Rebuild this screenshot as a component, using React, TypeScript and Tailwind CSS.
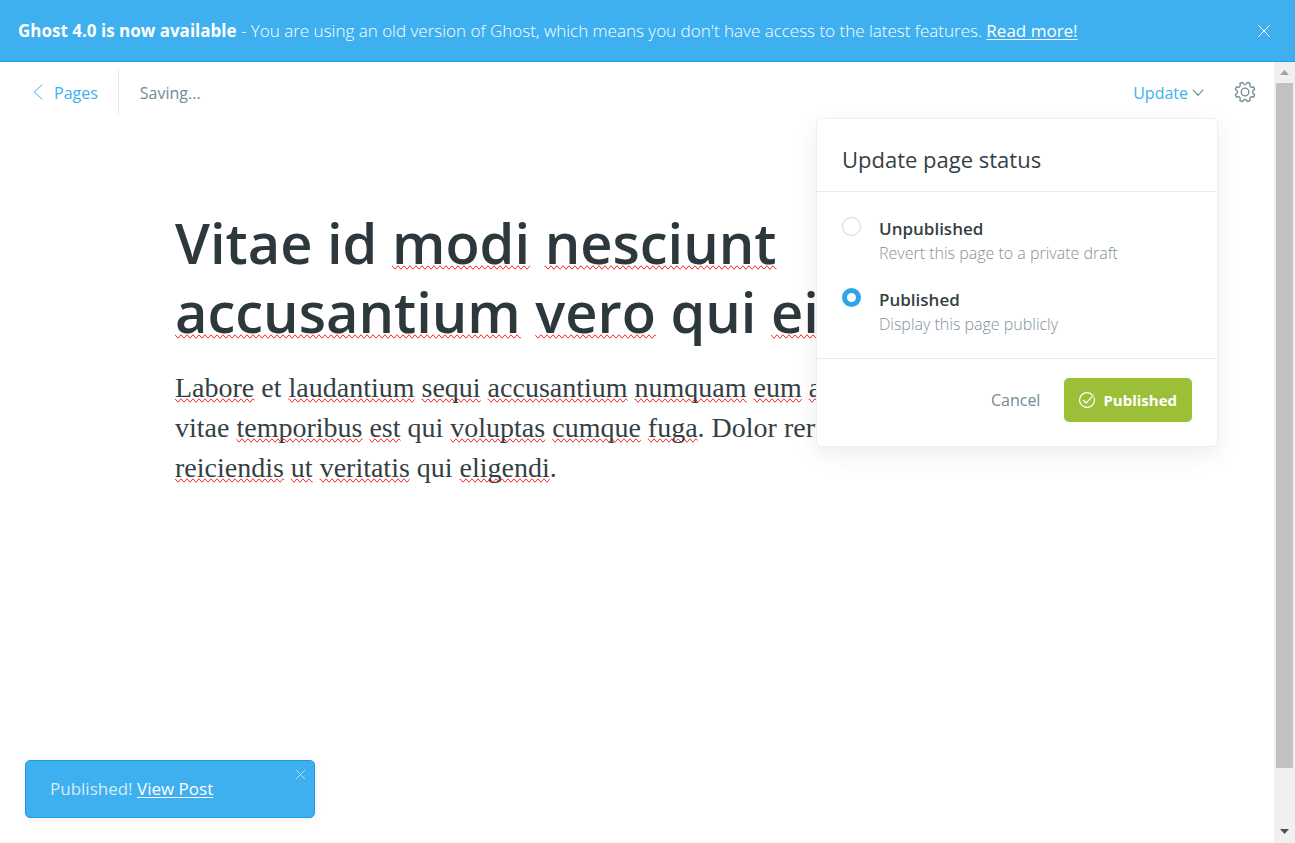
import { useState } from 'react';
import type { ReactNode } from 'react';

function Typo({ children }: { children: ReactNode }) {
  return <span className="[text-decoration-line:spelling-error]">{children}</span>;
}

function CloseIcon({ className }: { className: string }) {
  return (
    <svg viewBox="0 0 12 12" fill="none" stroke="currentColor" className={className} aria-hidden="true">
      <path d="M.5 .5 11.5 11.5M11.5 .5 .5 11.5" strokeLinecap="round" />
    </svg>
  );
}

function polar(angle: number, radius: number) {
  const a = (angle * Math.PI) / 180;
  return `${(11 + radius * Math.sin(a)).toFixed(2)} ${(11 - radius * Math.cos(a)).toFixed(2)}`;
}

function GearIcon() {
  let d = '';
  for (let i = 0; i < 8; i++) {
    const c = i * 45 + 22.5;
    d += `${i === 0 ? 'M' : 'L'}${polar(c - 8, 10)}L${polar(c + 8, 10)}L${polar(c + 11, 8.6)}Q${polar(c + 22.5, 6.6)} ${polar(c + 34, 8.6)}`;
  }
  return (
    <svg viewBox="0 0 22 22" fill="none" stroke="currentColor" strokeWidth="1.3" strokeLinejoin="round" className="size-[22px]" aria-hidden="true">
      <path d={`${d}Z`} />
      <circle cx="11" cy="11" r="3.8" />
    </svg>
  );
}

function Banner() {
  return (
    <aside className="flex h-[62px] shrink-0 items-center justify-between border-b border-[#1f9ae6] bg-[#3eb0ef] pr-[25px] pl-[18px] text-[17px] text-white">
      <p>
        <strong className="font-bold">Ghost 4.0 is now available</strong>
        <span className="font-light"> - You are using an old version of Ghost, which means you don't have access to the latest features. </span>
        <a href="#upgrade" className="underline underline-offset-2">Read more!</a>
      </p>
      <button type="button" aria-label="Dismiss">
        <CloseIcon className="size-3" />
      </button>
    </aside>
  );
}

function Option({ value, title, detail, selected, onSelect }: { value: string; title: string; detail: string; selected: boolean; onSelect: (v: string) => void }) {
  return (
    <label className="flex cursor-pointer gap-[18px]">
      <input
        type="radio"
        name="status"
        value={value}
        checked={selected}
        onChange={() => onSelect(value)}
        className="mt-px size-[19px] shrink-0 appearance-none rounded-full border border-[#c5d9e8] bg-white checked:border-[5px] checked:border-[#30a4e9]"
      />
      <span className="flex flex-col">
        <span className="text-[17px] leading-[25px] font-semibold text-[#343f44]">{title}</span>
        <span className="text-[16px] leading-[24px] font-light text-[#7f919b]">{detail}</span>
      </span>
    </label>
  );
}

function StatusMenu() {
  const [status, setStatus] = useState('published');
  return (
    <form className="absolute top-14 right-14 w-[402px] rounded-[5px] border border-[#eceff1] bg-white shadow-[0_8px_24px_rgba(0,0,0,0.07)]" onSubmit={(e) => e.preventDefault()}>
      <h2 className="border-b border-[#e3ecf3] px-[25px] pt-[25px] pb-4 text-[22px] leading-[31px] text-[#343f44]">Update page status</h2>
      <fieldset className="flex flex-col gap-[22px] border-b border-[#e3ecf3] px-[25px] pt-6 pb-[22px]">
        <Option value="draft" title="Unpublished" detail="Revert this page to a private draft" selected={status === 'draft'} onSelect={setStatus} />
        <Option value="published" title="Published" detail="Display this page publicly" selected={status === 'published'} onSelect={setStatus} />
      </fieldset>
      <div className="flex items-center justify-end gap-6 px-[25px] pt-[19px] pb-6">
        <button type="button" className="text-[16px] text-[#738a94]">Cancel</button>
        <button type="submit" className="flex h-11 items-center gap-2 rounded-[5px] bg-[#9bbf37] px-[15px] text-[15px] font-bold text-white">
          <svg viewBox="0 0 16 16" fill="none" stroke="currentColor" strokeWidth="1.2" strokeLinecap="round" strokeLinejoin="round" className="size-4" aria-hidden="true">
            <path d="M15.1 5.8A7.4 7.4 0 1 1 12.7 2.3M4.3 8.3 7.2 11 14.4 3.2" />
          </svg>
          Published
        </button>
      </div>
    </form>
  );
}

function Toolbar() {
  return (
    <header className="flex h-[60px] shrink-0 items-center justify-between pr-[18px] pl-[33px] text-[16px]">
      <div className="flex items-center">
        <a href="#pages" className="flex h-11 items-center gap-[11px] border-r border-[#e3ecf3] pr-5 text-[#3eb0ef]">
          <svg viewBox="0 0 10 16" fill="none" stroke="currentColor" strokeLinecap="round" strokeLinejoin="round" className="h-4 w-2.5" aria-hidden="true">
            <path d="M9 1 1.2 8 9 15" />
          </svg>
          <span className="pt-0.5">Pages</span>
        </a>
        <span className="pt-0.5 pl-[21px] text-[#738a94]">Saving...</span>
      </div>
      <div className="flex items-center gap-[30px]">
        <button type="button" className="flex items-center gap-1 pt-0.5 text-[#3eb0ef]">
          Update
          <svg viewBox="0 0 12 8" fill="none" stroke="#738a94" strokeWidth="1.2" strokeLinecap="round" strokeLinejoin="round" className="h-2 w-3" aria-hidden="true">
            <path d="M1.2 1.2 6 6.4 10.8 1.2" />
          </svg>
        </button>
        <button type="button" aria-label="Settings" className="text-[#738a94]">
          <GearIcon />
        </button>
      </div>
    </header>
  );
}

function Editor() {
  return (
    <article className="px-[175px] pt-[86px]">
      <h1 className="text-[56px] leading-[69px] font-semibold whitespace-nowrap text-[#2d383d]">
        Vitae id <Typo>modi</Typo> <Typo>nesciunt</Typo>
        <br />
        <Typo>accusantium</Typo> <Typo>vero</Typo> qui <Typo>ei</Typo>
      </h1>
      <p className="mt-[22px] font-['Liberation_Serif',serif] text-[28px] leading-10 whitespace-nowrap text-[#343f44]">
        <Typo>Labore</Typo> et <Typo>laudantium</Typo> <Typo>sequi</Typo> <Typo>accusantium</Typo> <Typo>numquam</Typo> <Typo>eum</Typo> <Typo>a</Typo>
        <br />
        vitae <Typo>temporibus</Typo> <Typo>est</Typo> qui <Typo>voluptas</Typo> <Typo>cumque</Typo> <Typo>fuga</Typo>. Dolor reru
        <br />
        <Typo>reiciendis</Typo> <Typo>ut</Typo> <Typo>veritatis</Typo> qui <Typo>eligendi</Typo>.
      </p>
    </article>
  );
}

function Toast() {
  return (
    <div role="status" className="absolute bottom-[25px] left-[25px] flex w-[290px] items-start justify-between rounded-[5px] border border-[#1f9ae6] bg-[#3eb0ef] pr-[9px] pl-6 text-[17px] text-white shadow-[0_2px_8px_rgba(0,0,0,0.06)]">
      <p className="leading-[56px]">
        <span className="text-[#d5edfb]">Published! </span>
        <a href="#post" className="underline underline-offset-2">View Post</a>
      </p>
      <button type="button" aria-label="Close" className="mt-[9px] text-[#d5edfb]">
        <CloseIcon className="size-[9px]" />
      </button>
    </div>
  );
}

function Scrollbar() {
  return (
    <div className="flex w-[21px] shrink-0 flex-col items-center bg-[#f0f0f0]">
      <button type="button" aria-label="Scroll up" className="flex h-[21px] items-center">
        <svg viewBox="0 0 9 5" className="h-[5px] w-[9px]" fill="#a3a3a3" aria-hidden="true"><path d="M0 5 4.5 0 9 5Z" /></svg>
      </button>
      <div className="flex w-[17px] flex-1 flex-col">
        <div className="grow-[685] bg-[#c1c1c1]" />
        <div className="grow-[51]" />
      </div>
      <button type="button" aria-label="Scroll down" className="flex h-6 items-center">
        <svg viewBox="0 0 9 5" className="h-[5px] w-[9px]" fill="#505050" aria-hidden="true"><path d="M0 0 4.5 5 9 0Z" /></svg>
      </button>
    </div>
  );
}

export default function App() {
  return (
    <div className="flex h-screen flex-col overflow-hidden bg-white font-['Open_Sans','Noto_Sans',sans-serif]">
      <Banner />
      <div className="flex min-h-0 flex-1">
        <main className="relative min-w-0 flex-1 overflow-hidden">
          <Toolbar />
          <Editor />
          <StatusMenu />
          <Toast />
        </main>
        <Scrollbar />
      </div>
    </div>
  );
}
